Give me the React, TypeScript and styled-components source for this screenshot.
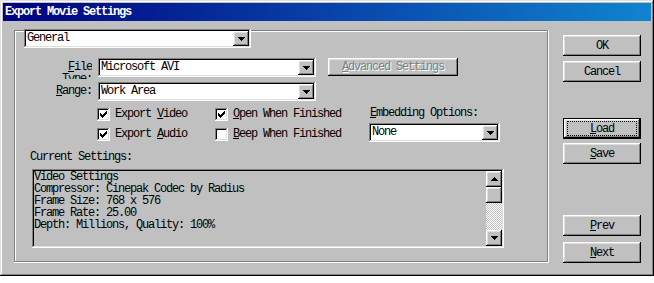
import React from 'react';
import styled, { createGlobalStyle, css } from 'styled-components';

const GlobalStyle = createGlobalStyle`
  html, body {
    margin: 0;
    padding: 0;
    background: #ffffff;
  }
  body {
    font-family: "Liberation Mono", "Courier New", monospace;
    font-size: 12px;
    letter-spacing: -1.2px;
    color: #000000;
  }
`;

const raised = css`
  box-shadow: inset -1px -1px #000000, inset 1px 1px #ffffff,
    inset -2px -2px #808080, inset 2px 2px #dfdfdf;
`;

const sunken = css`
  box-shadow: inset -1px -1px #ffffff, inset 1px 1px #808080,
    inset -2px -2px #dfdfdf, inset 2px 2px #000000;
`;

const Window = styled.div`
  width: 654px;
  height: 276px;
  box-sizing: border-box;
  padding: 3px;
  background: #c0c0c0;
  box-shadow: inset -1px -1px #000000, inset 1px 1px #dfdfdf,
    inset -2px -2px #808080, inset 2px 2px #ffffff;
  display: flex;
  flex-direction: column;
`;

const TitleBar = styled.div`
  height: 18px;
  flex: none;
  padding-left: 2px;
  background: linear-gradient(to right, #000080, #1084d0);
  color: #ffffff;
  font-weight: bold;
  line-height: 18px;
`;

const Body = styled.div`
  display: flex;
  align-items: flex-start;
`;

const Frame = styled.div`
  margin: 9px 0 0 11px;
  width: 535px;
  height: 233px;
  box-sizing: border-box;
  padding: 2px;
  box-shadow: inset -1px -1px #ffffff, inset 1px 1px #808080,
    inset -2px -2px #808080, inset 2px 2px #ffffff;
  display: flex;
  flex-direction: column;
  align-items: flex-start;
`;

const U = styled.span`
  text-decoration: underline;
`;

// combo boxes
const ComboBox = styled.div<{ $width: number }>`
  width: ${(p) => p.$width}px;
  height: 19px;
  flex: none;
  box-sizing: border-box;
  padding: 2px;
  background: #ffffff;
  ${sunken}
  display: flex;
`;

const ComboText = styled.div`
  flex: 1;
  padding-left: 1px;
  line-height: 15px;
  white-space: nowrap;
  overflow: hidden;
`;

const DropButton = styled.div`
  width: 16px;
  height: 15px;
  box-sizing: border-box;
  background: #c0c0c0;
  ${raised}
  display: flex;
  align-items: center;
  justify-content: center;
`;

const HeaderCombo = styled(ComboBox)`
  margin: -3px 0 0 8px;
`;

const Arrow = ({ up }: { up?: boolean }) => (
  <svg width="7" height="4" viewBox="0 0 7 4" shapeRendering="crispEdges">
    <path
      fill="#000"
      d={
        up
          ? 'M3 0h1v1h1v1h1v1h1v1h-7v-1h1v-1h1v-1h1z'
          : 'M0 0h7v1h-1v1h-1v1h-1v1h-1v-1h-1v-1h-1v-1h-1z'
      }
    />
  </svg>
);

const Combo = ({ value, width }: { value: string; width: number }) => (
  <ComboBox $width={width}>
    <ComboText>{value}</ComboText>
    <DropButton>
      <Arrow />
    </DropButton>
  </ComboBox>
);

// field rows
const FieldRow = styled.div<{ $top: number }>`
  display: flex;
  align-items: flex-start;
  margin-top: ${(p) => p.$top}px;
`;

const FieldLabel = styled.div`
  width: 76px;
  margin-right: 6px;
  height: 21px;
  margin-bottom: -2px;
  box-sizing: border-box;
  padding-top: 3px;
  line-height: 12px;
  text-align: right;
  overflow: hidden;
`;

const PushButton = styled.button<{ $w: number; $h: number; $top?: number; $default?: boolean }>`
  width: ${(p) => p.$w}px;
  height: ${(p) => p.$h}px;
  margin: ${(p) => p.$top ?? 0}px 0 0 0;
  padding: 0;
  border: none;
  flex: none;
  background: #c0c0c0;
  font: inherit;
  letter-spacing: inherit;
  color: #000000;
  display: flex;
  align-items: center;
  justify-content: center;
  ${(p) =>
    p.$default
      ? css`
          box-shadow: inset 0 0 0 1px #000000, inset -2px -2px #000000,
            inset 2px 2px #ffffff, inset -3px -3px #808080,
            inset 3px 3px #dfdfdf;
        `
      : raised}

  &:disabled {
    color: #808080;
    text-shadow: 1px 1px 0 #ffffff;
  }
`;

const AdvancedButton = styled(PushButton)`
  margin-left: 12px;
`;

const FocusRing = styled.span`
  flex: 1;
  align-self: stretch;
  margin: 3px 4px;
  border: 1px dotted #000000;
  display: flex;
  align-items: center;
  justify-content: center;
`;

// check boxes
const OptionsRow = styled.div`
  display: flex;
  margin: 3px 0 0 81px;
`;

const OptionColumn = styled.div<{ $width: number }>`
  width: ${(p) => p.$width}px;
  display: flex;
  flex-direction: column;
`;

const CheckItem = styled.div`
  height: 20px;
  display: flex;
  align-items: center;
  gap: 5px;
  white-space: nowrap;
`;

const CheckBox = styled.span`
  width: 13px;
  height: 13px;
  flex: none;
  box-sizing: border-box;
  padding: 3px;
  background: #ffffff;
  ${sunken}
  display: flex;
`;

const checkCols = [2, 3, 4, 3, 2, 1, 0];

const Check = ({ label, checked }: { label: React.ReactNode; checked?: boolean }) => (
  <CheckItem>
    <CheckBox>
      {checked && (
        <svg width="7" height="7" viewBox="0 0 7 7" shapeRendering="crispEdges">
          {checkCols.map((y, x) => (
            <rect key={x} x={x} y={y} width="1" height="3" fill="#000" />
          ))}
        </svg>
      )}
    </CheckBox>
    <span>{label}</span>
  </CheckItem>
);

const EmbedLabel = styled.div`
  line-height: 19px;
  padding-left: 1px;
  white-space: nowrap;
`;

// current settings
const SectionLabel = styled.div`
  margin: 7px 0 0 14px;
  line-height: 12px;
`;

const SettingsBox = styled.div`
  margin: 6px 0 0 16px;
  width: 472px;
  height: 79px;
  box-sizing: border-box;
  padding: 2px;
  background: #c0c0c0;
  ${sunken}
  display: flex;
`;

const SettingsText = styled.div`
  flex: 1;
  line-height: 12px;
  white-space: pre;
  overflow: hidden;
`;

const ScrollBar = styled.div`
  width: 16px;
  display: flex;
  flex-direction: column;
`;

const ScrollPart = styled.div`
  height: 16px;
  flex: none;
  box-sizing: border-box;
  background: #c0c0c0;
  ${raised}
  display: flex;
  align-items: center;
  justify-content: center;
`;

const ScrollTrack = styled.div`
  flex: 1;
  background: repeating-conic-gradient(#c0c0c0 0 25%, #ffffff 0 50%) 0 0 / 2px 2px;
`;

// right hand buttons
const ButtonColumn = styled.div`
  margin: 14px 0 0 14px;
  width: 78px;
  display: flex;
  flex-direction: column;
`;

const settings = [
  'Video Settings',
  'Compressor: Cinepak Codec by Radius',
  'Frame Size: 768 x 576',
  'Frame Rate: 25.00',
  'Depth: Millions, Quality: 100%',
];

const App: React.FC = () => {
  return (
    <>
      <GlobalStyle />
      <Window>
        <TitleBar>Export Movie Settings</TitleBar>
        <Body>
          <Frame>
            <HeaderCombo $width={227}>
              <ComboText>General</ComboText>
              <DropButton>
                <Arrow />
              </DropButton>
            </HeaderCombo>

            <FieldRow $top={10}>
              <FieldLabel>
                <U>F</U>ile
                <br />
                Type:
              </FieldLabel>
              <Combo value="Microsoft AVI" width={218} />
              <AdvancedButton $w={130} $h={18} disabled>
                <span>
                  <U>A</U>dvanced Settings
                </span>
              </AdvancedButton>
            </FieldRow>

            <FieldRow $top={5}>
              <FieldLabel>
                <U>R</U>ange:
              </FieldLabel>
              <Combo value="Work Area" width={218} />
            </FieldRow>

            <OptionsRow>
              <OptionColumn $width={118}>
                <Check checked label={<>Export <U>V</U>ideo</>} />
                <Check checked label={<>Export <U>A</U>udio</>} />
              </OptionColumn>
              <OptionColumn $width={154}>
                <Check checked label={<><U>O</U>pen When Finished</>} />
                <Check label={<><U>B</U>eep When Finished</>} />
              </OptionColumn>
              <OptionColumn $width={131}>
                <EmbedLabel>
                  <U>E</U>mbedding Options:
                </EmbedLabel>
                <Combo value="None" width={131} />
              </OptionColumn>
            </OptionsRow>

            <SectionLabel>Current Settings:</SectionLabel>
            <SettingsBox>
              <SettingsText>{settings.join('\n')}</SettingsText>
              <ScrollBar>
                <ScrollPart>
                  <Arrow up />
                </ScrollPart>
                <ScrollPart />
                <ScrollTrack />
                <ScrollPart>
                  <Arrow />
                </ScrollPart>
              </ScrollBar>
            </SettingsBox>
          </Frame>

          <ButtonColumn>
            <PushButton $w={78} $h={21}>OK</PushButton>
            <PushButton $w={78} $h={21} $top={5}>Cancel</PushButton>
            <PushButton $w={78} $h={21} $top={36} $default>
              <FocusRing>
                <U>L</U>oad
              </FocusRing>
            </PushButton>
            <PushButton $w={78} $h={21} $top={4}>
              <span>
                <U>S</U>ave
              </span>
            </PushButton>
            <PushButton $w={78} $h={21} $top={51}>
              <span>
                <U>P</U>rev
              </span>
            </PushButton>
            <PushButton $w={78} $h={21} $top={6}>
              <span>
                <U>N</U>ext
              </span>
            </PushButton>
          </ButtonColumn>
        </Body>
      </Window>
    </>
  );
};

export default App;
